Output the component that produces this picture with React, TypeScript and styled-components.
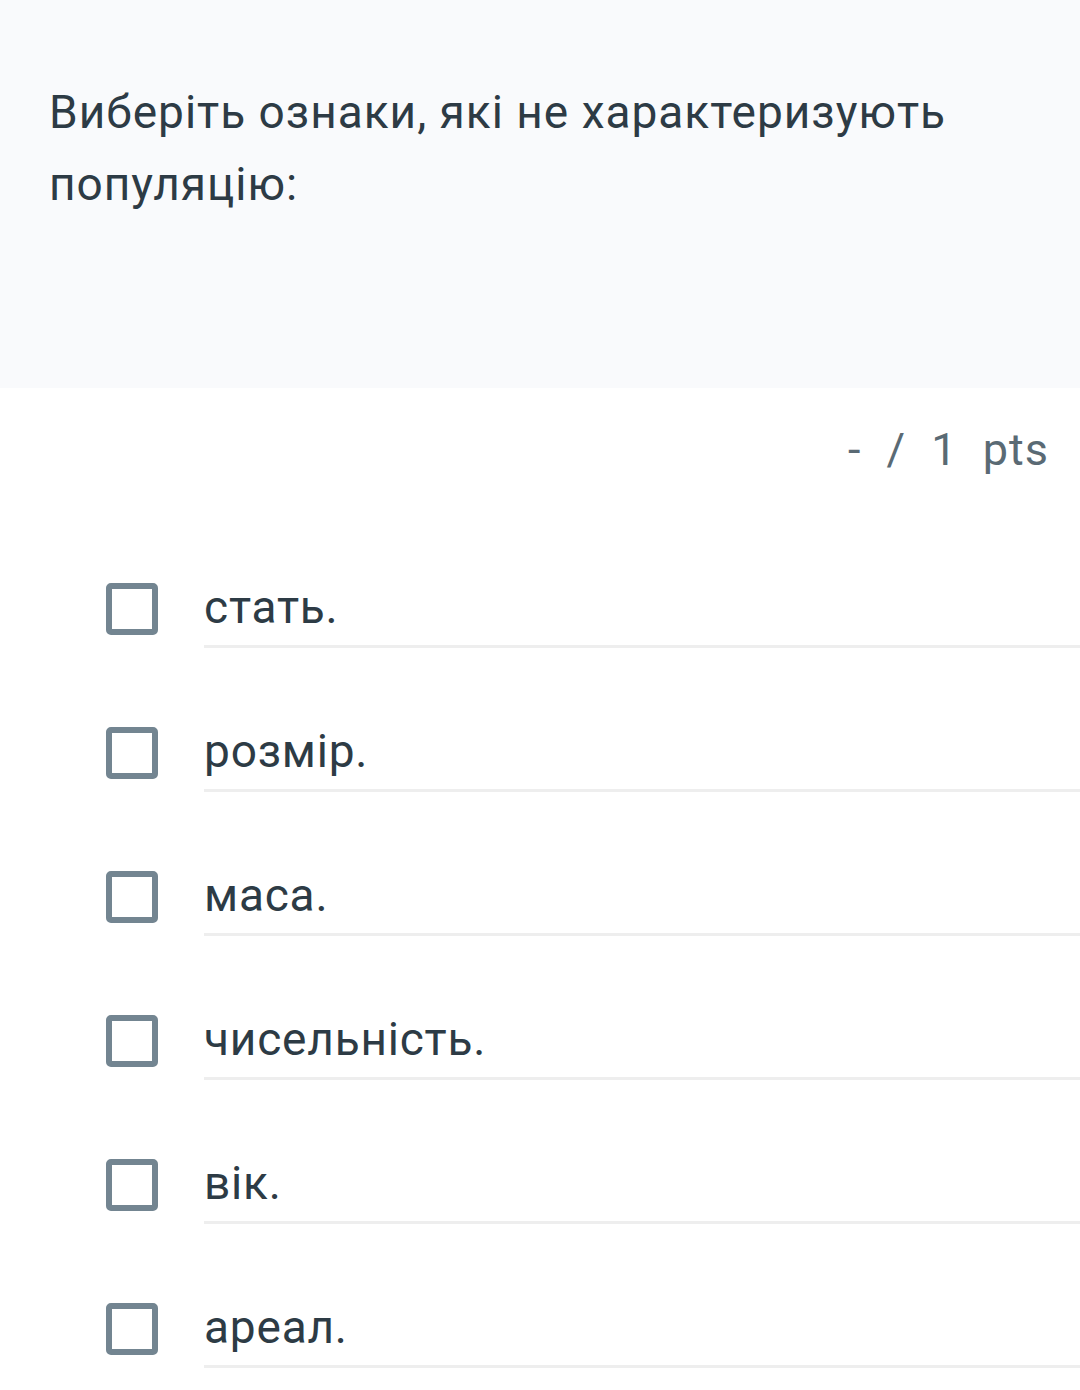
import React from 'react';
import styled, {createGlobalStyle} from 'styled-components';

const GlobalStyle = createGlobalStyle`
  html, body {
    margin: 0;
    padding: 0;
    background: #ffffff;
  }
  body {
    font-family: Roboto, "Noto Sans", sans-serif;
    color: #2d3b45;
  }
`;

const Page = styled.div`
  width: 1080px;
  display: flex;
  flex-direction: column;
`;

const QuestionHeader = styled.div`
  height: 388px;
  box-sizing: border-box;
  background-color: #f9fafc;
  padding: 76px 30px 0 49px;
`;

const QuestionText = styled.p`
  margin: 0;
  font-size: 46px;
  letter-spacing: 1px;
  line-height: 72px;
  color: #2d3b45;
`;

const PointsRow = styled.div`
  display: flex;
  justify-content: flex-end;
  padding: 32px 31px 0 0;
  height: 150px;
  box-sizing: border-box;
`;

const Points = styled.span`
  font-size: 45px;
  line-height: 60px;
  color: #5a6a74;
  letter-spacing: 1px;
  word-spacing: 13px;
  white-space: pre;
`;

const Answers = styled.ul`
  list-style: none;
  margin: 0;
  padding: 0;
  display: flex;
  flex-direction: column;
`;

const AnswerRow = styled.li`
  display: flex;
  align-items: flex-start;
  height: 144px;
  padding-left: 106px;
  padding-top: 45px;
  box-sizing: border-box;
`;

const Checkbox = styled.span`
  width: 52px;
  height: 52px;
  box-sizing: border-box;
  border: 6px solid #738591;
  border-radius: 5px;
  background: #fff;
  flex-shrink: 0;
`;

const AnswerLabel = styled.div`
  flex: 1;
  margin-left: 46px;
  border-bottom: 3px solid #eeeeee;
  font-size: 46px;
  letter-spacing: 0.8px;
  line-height: 56px;
  padding-bottom: 10px;
  margin-top: -4px;
  color: #2d3b45;
`;

const answers = ['стать.', 'розмір.', 'маса.', 'чисельність.', 'вік.', 'ареал.'];

export default function App() {
  return (
    <Page>
      <GlobalStyle/>
      <QuestionHeader>
        <QuestionText>Виберіть ознаки, які не характеризують популяцію:</QuestionText>
      </QuestionHeader>
      <PointsRow>
        <Points>- / 1 pts</Points>
      </PointsRow>
      <Answers>
        {answers.map(a => (
          <AnswerRow key={a}>
            <Checkbox/>
            <AnswerLabel>{a}</AnswerLabel>
          </AnswerRow>
        ))}
      </Answers>
    </Page>
  );
}
